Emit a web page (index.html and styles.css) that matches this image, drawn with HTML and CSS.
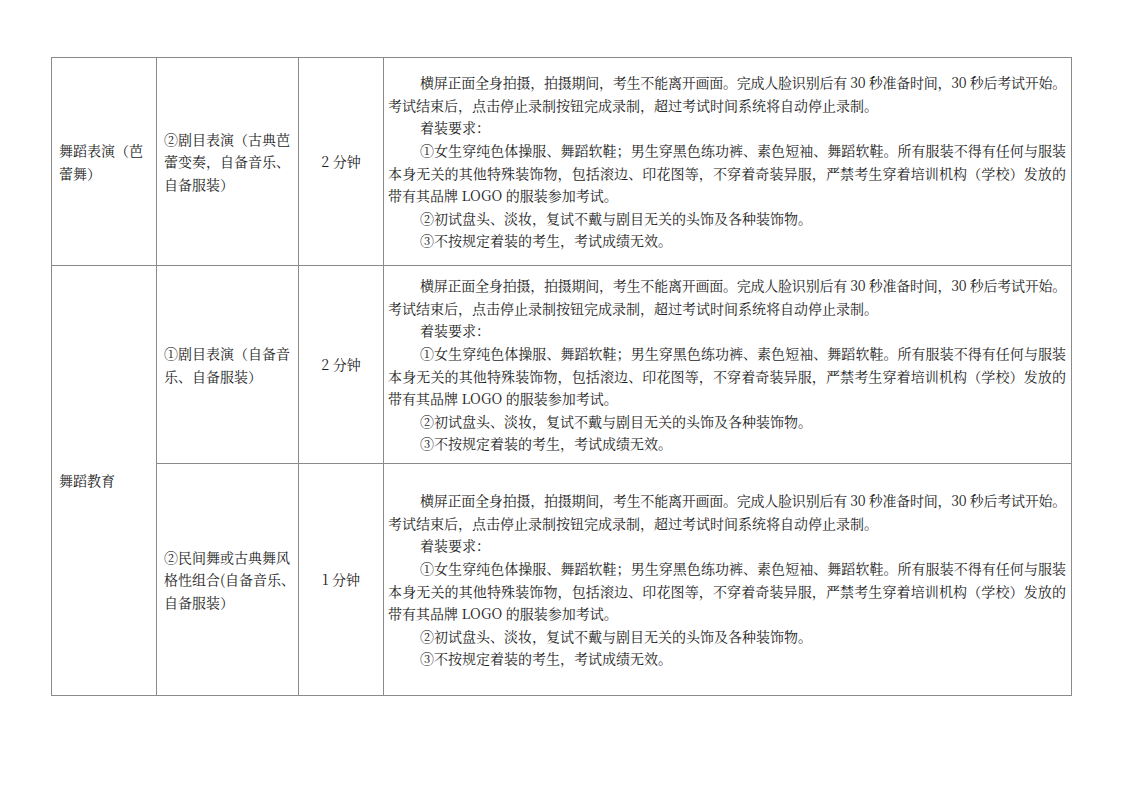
FILE: index.html
```html
<!DOCTYPE html>
<html lang="zh-CN">
<head>
<meta charset="utf-8">
<title>舞蹈考试要求</title>
<link rel="stylesheet" href="styles.css">
</head>
<body>
<table class="sheet">
  <colgroup>
    <col class="c1"><col class="c2"><col class="c3"><col class="c4">
  </colgroup>
  <tr class="r1">
    <td class="cat">舞蹈表演（芭<br>蕾舞）</td>
    <td class="item">②剧目表演（古典芭<br>蕾变奏，自备音乐、<br>自备服装）</td>
    <td class="time">2 分钟</td>
    <td class="req">
      <span class="ln ind j tight">横屏正面全身拍摄，拍摄期间，考生不能离开画面。完成人脸识别后有 30 秒准备时间，30 秒后考试开始。</span>
      <span class="ln">考试结束后，点击停止录制按钮完成录制，超过考试时间系统将自动停止录制。</span>
      <span class="ln ind">着装要求：</span>
      <span class="ln ind j">①女生穿纯色体操服、舞蹈软鞋；男生穿黑色练功裤、素色短袖、舞蹈软鞋。所有服装不得有任何与服装</span>
      <span class="ln j">本身无关的其他特殊装饰物，包括滚边、印花图等，不穿着奇装异服，严禁考生穿着培训机构（学校）发放的</span>
      <span class="ln">带有其品牌 LOGO 的服装参加考试。</span>
      <span class="ln ind">②初试盘头、淡妆，复试不戴与剧目无关的头饰及各种装饰物。</span>
      <span class="ln ind">③不按规定着装的考生，考试成绩无效。</span>
    </td>
  </tr>
  <tr class="r2">
    <td class="cat" rowspan="2">舞蹈教育</td>
    <td class="item">①剧目表演（自备音<br>乐、自备服装）</td>
    <td class="time">2 分钟</td>
    <td class="req">
      <span class="ln ind j tight">横屏正面全身拍摄，拍摄期间，考生不能离开画面。完成人脸识别后有 30 秒准备时间，30 秒后考试开始。</span>
      <span class="ln">考试结束后，点击停止录制按钮完成录制，超过考试时间系统将自动停止录制。</span>
      <span class="ln ind">着装要求：</span>
      <span class="ln ind j">①女生穿纯色体操服、舞蹈软鞋；男生穿黑色练功裤、素色短袖、舞蹈软鞋。所有服装不得有任何与服装</span>
      <span class="ln j">本身无关的其他特殊装饰物，包括滚边、印花图等，不穿着奇装异服，严禁考生穿着培训机构（学校）发放的</span>
      <span class="ln">带有其品牌 LOGO 的服装参加考试。</span>
      <span class="ln ind">②初试盘头、淡妆，复试不戴与剧目无关的头饰及各种装饰物。</span>
      <span class="ln ind">③不按规定着装的考生，考试成绩无效。</span>
    </td>
  </tr>
  <tr class="r3">
    <td class="item">②民间舞或古典舞风<br>格性组合(自备音乐、<br>自备服装）</td>
    <td class="time">1 分钟</td>
    <td class="req">
      <span class="ln ind j tight">横屏正面全身拍摄，拍摄期间，考生不能离开画面。完成人脸识别后有 30 秒准备时间，30 秒后考试开始。</span>
      <span class="ln">考试结束后，点击停止录制按钮完成录制，超过考试时间系统将自动停止录制。</span>
      <span class="ln ind">着装要求：</span>
      <span class="ln ind j">①女生穿纯色体操服、舞蹈软鞋；男生穿黑色练功裤、素色短袖、舞蹈软鞋。所有服装不得有任何与服装</span>
      <span class="ln j">本身无关的其他特殊装饰物，包括滚边、印花图等，不穿着奇装异服，严禁考生穿着培训机构（学校）发放的</span>
      <span class="ln">带有其品牌 LOGO 的服装参加考试。</span>
      <span class="ln ind">②初试盘头、淡妆，复试不戴与剧目无关的头饰及各种装饰物。</span>
      <span class="ln ind">③不按规定着装的考生，考试成绩无效。</span>
    </td>
  </tr>
</table>
</body>
</html>
```
FILE: styles.css
```css
html, body {
  margin: 0;
  padding: 0;
  background: #ffffff;
}
body {
  font-family: "Noto Serif CJK SC", "Liberation Serif", "Noto Sans CJK SC", serif;
  font-size: 14px;
  color: #1c1c1c;
}
.sheet {
  border-collapse: collapse;
  margin: 57px 0 0 51px;
  width: 1020px;
  table-layout: fixed;
}
.c1 { width: 105px; }
.c2 { width: 142px; }
.c3 { width: 85px; }
.c4 { width: 688px; }
.sheet td {
  border: 1px solid #8a8a8a;
  vertical-align: middle;
  line-height: 22.6px;
  padding: 0;
  white-space: nowrap;
}
.r1 td { height: 207px; }
.r2 td { height: 197px; }
.r3 td { height: 231px; }
.cat { padding-left: 7px !important; }
.item { padding-left: 7px !important; }
.time { text-align: center; }
.req { padding: 0 5px 0 4px !important; }
.ln { display: block; }
.ind { text-indent: 32px; }
.j { text-align: justify; text-align-last: justify; }
.tight { letter-spacing: -0.3px; }
```
